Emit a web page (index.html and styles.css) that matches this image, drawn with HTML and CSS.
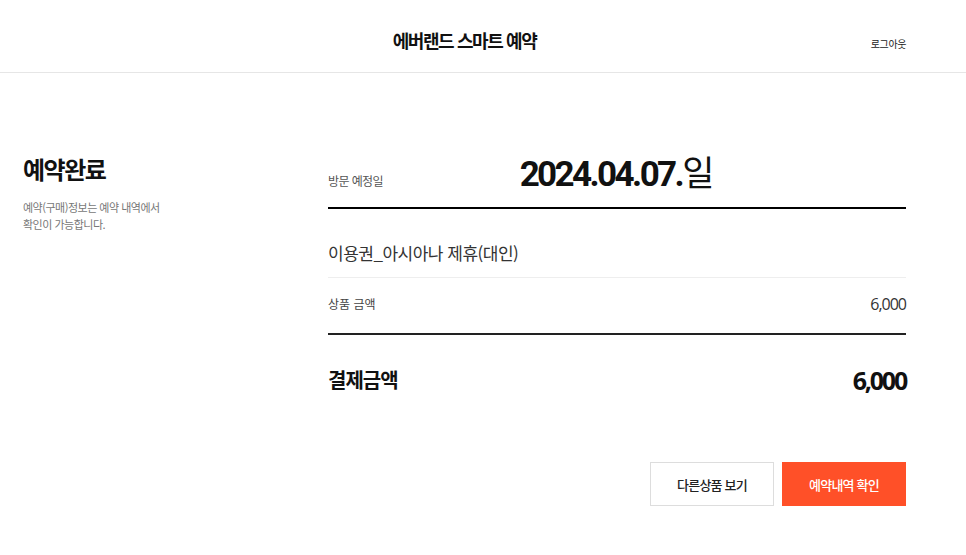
FILE: index.html
```html
<!DOCTYPE html>
<html lang="ko">
<head>
  <meta charset="UTF-8">
  <title>에버랜드 스마트 예약</title>
  <meta name="viewport" content="width=device-width, initial-scale=1.0">
  <link rel="stylesheet" href="styles.css">
</head>
<body>

  <header class="header">
    <div class="header-inner">
      <h1 class="header-title">에버랜드 스마트 예약</h1>
      <a class="logout" href="#">로그아웃</a>
    </div>
  </header>

  <main class="main">
    <section class="side">
      <h2 class="side-title">예약완료</h2>
      <p class="side-desc">예약(구매)정보는 예약 내역에서<br>확인이 가능합니다.</p>
    </section>

    <section class="detail">
      <div class="visit-row">
        <span class="visit-label">방문 예정일</span>
        <strong class="visit-date">2024.04.07.<span class="visit-day">일</span></strong>
      </div>

      <div class="product-name">이용권_아시아나 제휴(대인)</div>

      <div class="price-row">
        <span class="price-label">상품 금액</span>
        <span class="price-value">6,000</span>
      </div>

      <div class="total-row">
        <span class="total-label">결제금액</span>
        <span class="total-value">6,000</span>
      </div>

      <div class="buttons">
        <button class="btn btn-line">다른상품 보기</button>
        <button class="btn btn-main">예약내역 확인</button>
      </div>
    </section>
  </main>

</body>
</html>
```

FILE: styles.css
```css
body {
  margin: 0;
  background-color: #ffffff;
  color: #111;
  font-family: "Noto Sans CJK KR", "Noto Sans", sans-serif;
}

/* header */
.header {
  border-bottom: 1px solid #e6e6e6;
}

.header-inner {
  position: relative;
  height: 72px;
  margin: 0 60px 0 23px;
  display: flex;
  align-items: center;
  justify-content: center;
}

.header-title {
  margin: 0;
  font-size: 18px;
  font-weight: 700;
  letter-spacing: -1.4px;
  color: #111;
  transform: translateY(4px);
}

.logout {
  position: absolute;
  right: 0;
  top: 36px;
  font-size: 10px;
  letter-spacing: -0.4px;
  color: #222;
  text-decoration: none;
}

/* main */
.main {
  display: flex;
  margin: 0 60px 0 23px;
  padding-top: 80px;
}

.side {
  width: 305px;
  flex-shrink: 0;
}

.side-title {
  margin: 0;
  font-size: 24px;
  line-height: 32px;
  font-weight: 700;
  letter-spacing: -1.5px;
  color: #111;
}

.side-desc {
  margin: 14px 0 0;
  font-size: 11px;
  line-height: 17px;
  letter-spacing: -0.5px;
  color: #777;
}

.detail {
  flex: 1;
}

.visit-row {
  display: grid;
  grid-template-columns: 1fr auto 1fr;
  align-items: baseline;
  margin-top: -4px;
  padding-bottom: 10px;
  border-bottom: 2px solid #000;
}

.visit-label {
  font-size: 12px;
  letter-spacing: -0.6px;
  color: #555;
}

.visit-date {
  font-family: Roboto, "Noto Sans CJK KR", sans-serif;
  font-size: 35px;
  line-height: 44px;
  font-weight: 700;
  letter-spacing: -2.6px;
  color: #111;
}

.visit-day {
  font-family: "Noto Sans CJK KR", sans-serif;
  font-weight: 400;
  letter-spacing: 0;
}

.product-name {
  padding: 31px 0 11px;
  font-size: 17px;
  line-height: 26px;
  letter-spacing: -0.5px;
  color: #333;
  border-bottom: 1px solid #eee;
}

.price-row {
  display: flex;
  justify-content: space-between;
  align-items: center;
  padding: 14px 0 17px;
  line-height: 24px;
  border-bottom: 2px solid #222;
}

.price-label {
  font-size: 12px;
  color: #444;
}

.price-value {
  font-family: "Open Sans", sans-serif;
  font-size: 16px;
  letter-spacing: -1px;
  color: #333;
}

.total-row {
  display: flex;
  justify-content: space-between;
  align-items: center;
  padding-top: 30px;
  line-height: 30px;
}

.total-label {
  font-size: 20px;
  font-weight: 700;
  letter-spacing: -1px;
  color: #111;
}

.total-value {
  font-family: "Open Sans", sans-serif;
  font-size: 25px;
  font-weight: 700;
  letter-spacing: -2.2px;
  color: #111;
}

.buttons {
  display: flex;
  justify-content: flex-end;
  gap: 8px;
  margin-top: 67px;
}

.btn {
  width: 124px;
  height: 44px;
  font-family: inherit;
  font-size: 13px;
  font-weight: 500;
  letter-spacing: -0.8px;
  cursor: pointer;
}

.btn-line {
  background-color: #fff;
  border: 1px solid #ddd;
  color: #222;
}

.btn-main {
  background-color: #ff5028;
  border: none;
  color: #fff;
}
```
